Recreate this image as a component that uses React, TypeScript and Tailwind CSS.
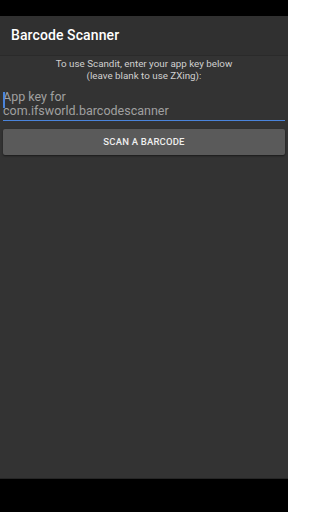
import React from "react";

const App: React.FC = () => {
  return (
    <div
      className="w-[288px] h-[512px] flex flex-col bg-black"
      style={{ fontFamily: "Roboto, 'Noto Sans', sans-serif" }}
    >
      {/* status bar */}
      <div className="h-[16px] bg-black" />
      {/* toolbar */}
      <div className="h-[40px] bg-[#303030] flex items-center px-[11px] border-b border-[#2a2a2a]">
        <span className="text-white font-medium text-[14px] tracking-[0.1px]">
          Barcode Scanner
        </span>
      </div>
      {/* content */}
      <div className="flex-1 bg-[#333333] flex flex-col px-[3px] pt-[2px]">
        <p className="text-center text-[#d0d0d0] text-[9.8px] leading-[12px]">
          To use Scandit, enter your app key below
          <br />
          (leave blank to use ZXing):
        </p>
        <div className="relative mt-[6px] border-b-[1.5px] border-[#4a84dc] pb-[2px]">
          <span className="absolute left-0 top-[4px] w-[1.5px] h-[16px] bg-[#4a84dc]" />
          <p className="text-[#a0a0a0] text-[12.5px] leading-[14px] pt-[2px]">
            App key for
            <br />
            com.ifsworld.barcodescanner
          </p>
        </div>
        <button className="mt-[8px] h-[26px] w-full bg-[#5a5a5a] rounded-[2px] shadow-[0_1px_2px_rgba(0,0,0,0.5)] text-[#eeeeee] text-[9.5px] font-medium tracking-[0.2px]">
          SCAN A BARCODE
        </button>
      </div>
      {/* nav bar */}
      <div className="h-[34px] bg-black border-t border-[#262626]" />
    </div>
  );
};

export default App;
